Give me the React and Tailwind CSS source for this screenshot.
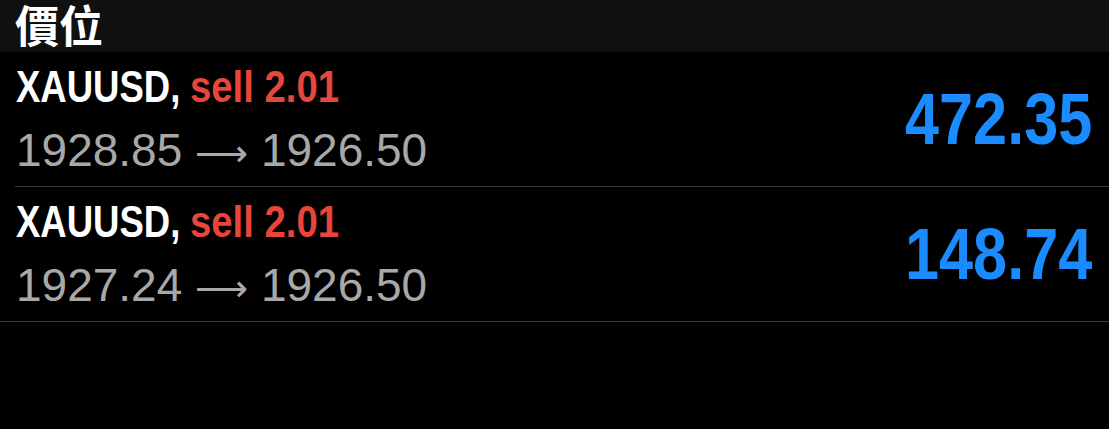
export default function App() {
  const positions = [
    { symbol: "XAUUSD", side: "sell", volume: "2.01", open: "1928.85", current: "1926.50", profit: "472.35", inset: true },
    { symbol: "XAUUSD", side: "sell", volume: "2.01", open: "1927.24", current: "1926.50", profit: "148.74", inset: false },
  ];

  return (
    <div className="w-[1109px] h-[429px] bg-black overflow-hidden font-['Liberation_Sans',sans-serif]">
      <div className="h-[52px] bg-[#101010] px-[15px] flex items-center">
        <span className="text-white text-[44px] font-bold leading-none -mt-[5px] font-['Noto_Sans_CJK_TC','Noto_Sans_CJK_SC',sans-serif]">
          價位
        </span>
      </div>

      {positions.map((p, i) => (
        <div key={i}>
          <div className="h-[134px] flex items-center justify-between pl-[16px] pr-[17px]">
            <div className="flex flex-col gap-[18px]">
              <div className="text-[44px] font-bold leading-none whitespace-nowrap flex">
                <span className="inline-block w-[174px] origin-left scale-x-[0.83] text-white">{p.symbol},</span>
                <span className="inline-block origin-left scale-x-[0.87] text-[#e8453b]">{p.side} {p.volume}</span>
              </div>
              <div className="text-[46px] leading-none text-[#a8a8a8] whitespace-nowrap">
                {p.open}{" "}
                <span className="font-['DejaVu_Sans',sans-serif] text-[37px]">⟶</span>{" "}
                {p.current}
              </div>
            </div>
            <div className="text-[72px] font-bold leading-none text-[#1a8cff]">
              <span className="inline-block origin-right scale-x-[0.85]">{p.profit}</span>
            </div>
          </div>
          <div className={`h-px bg-[#3a3a3a] ${p.inset ? "ml-[15px]" : ""}`} />
        </div>
      ))}
    </div>
  );
}
